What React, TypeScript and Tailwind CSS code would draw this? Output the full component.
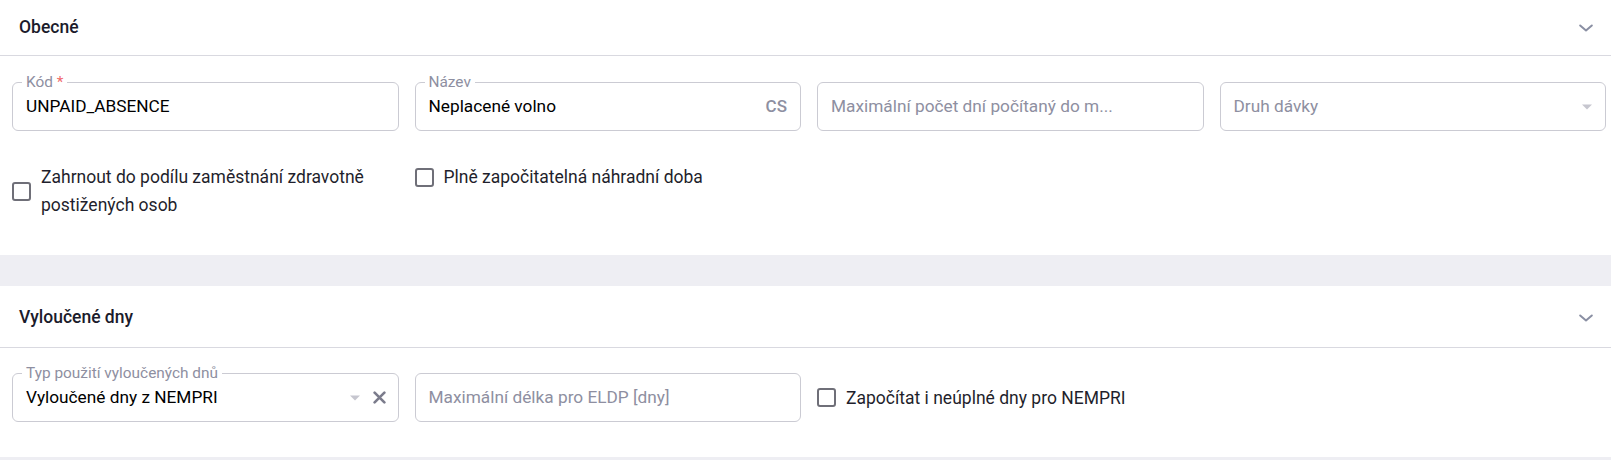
import { ReactNode } from 'react';

const font = { fontFamily: 'Roboto, "Noto Sans", sans-serif' };

function Chevron() {
  return (
    <svg width="20" height="20" viewBox="0 0 24 24" fill="none" stroke="#8a8fa3" strokeWidth="2.4" strokeLinecap="round" strokeLinejoin="round">
      <path d="M5 9l7 6 7-6" />
    </svg>
  );
}

function Caret() {
  return (
    <svg width="12" height="8" viewBox="0 0 12 8">
      <path d="M1 1.5h10L6 6.5z" fill="#c6c6cf" />
    </svg>
  );
}

function Section({ title, tall, children }: { title: string; tall?: boolean; children: ReactNode }) {
  return (
    <section className="bg-white">
      <div className={`${tall ? 'h-[62px] pt-[2px]' : 'h-[56px]'} flex items-center justify-between pl-[19px] pr-[15px] border-b border-[#d9d9e0]`}>
        <h2 className="text-[17.5px] font-medium text-[#1b1b2b]">{title}</h2>
        <Chevron />
      </div>
      {children}
    </section>
  );
}

function Field({ label, required, children }: { label?: string; required?: boolean; children: ReactNode }) {
  return (
    <div className="relative h-[49px] border border-[#cbcbd3] rounded-[6px] flex items-center pl-[13px] pr-[12px]">
      {label && (
        <span className="absolute -top-[11px] left-[9px] bg-white px-[4px] text-[15.4px] leading-[20px] text-[#8e8fa1]">
          {label}
          {required && <span className="text-[#f06b6b]"> *</span>}
        </span>
      )}
      {children}
    </div>
  );
}

function Checkbox({ label }: { label: ReactNode }) {
  return (
    <label className="flex items-center gap-[10px] text-[17.5px] leading-[28px] text-[#1f1f2c]">
      <span className="shrink-0 w-[19px] h-[19px] border-2 border-[#6f6f78] rounded-[3px]" />
      <span>{label}</span>
    </label>
  );
}

export default function App() {
  return (
    <div className="w-[1611px] h-[460px] bg-[#eeeef3] overflow-hidden" style={font}>
      <Section title="Obecné">
        <div className="pl-3 pr-[5px] pt-[26px] pb-[36px]">
          <div className="grid grid-cols-4 gap-4">
            <Field label="Kód" required>
              <span className="text-[17.25px] text-black">UNPAID_ABSENCE</span>
            </Field>
            <Field label="Název">
              <span className="text-[17.25px] text-black flex-1">Neplacené volno</span>
              <span className="text-[17px] font-medium text-[#8e8fa1] mr-[1px]">CS</span>
            </Field>
            <Field>
              <span className="text-[17.25px] text-[#8e8fa1] truncate">Maximální počet dní počítaný do m...</span>
            </Field>
            <Field>
              <span className="text-[17.25px] text-[#8e8fa1] flex-1">Druh dávky</span>
              <Caret />
            </Field>
          </div>
          <div className="grid grid-cols-4 gap-4 mt-[32px]">
            <Checkbox label={<>Zahrnout do podílu zaměstnání zdravotně postižených osob</>} />
            <div className="self-start">
              <Checkbox label="Plně započitatelná náhradní doba" />
            </div>
          </div>
        </div>
      </Section>
      <div className="h-[31px]" />
      <Section title="Vyloučené dny" tall>
        <div className="pl-3 pr-[5px] pt-[25px] pb-[35px]">
          <div className="grid grid-cols-4 gap-4">
            <Field label="Typ použití vyloučených dnů">
              <span className="text-[17.25px] text-black flex-1">Vyloučené dny z NEMPRI</span>
              <Caret />
              <svg className="ml-[12px]" width="13" height="13" viewBox="0 0 12 12" stroke="#7b7c8c" strokeWidth="2.4" strokeLinecap="round">
                <path d="M1.5 1.5l9 9M10.5 1.5l-9 9" />
              </svg>
            </Field>
            <Field>
              <span className="text-[17.25px] text-[#8e8fa1]">Maximální délka pro ELDP [dny]</span>
            </Field>
            <div className="flex items-center">
              <Checkbox label="Započítat i neúplné dny pro NEMPRI" />
            </div>
          </div>
        </div>
      </Section>
    </div>
  );
}
